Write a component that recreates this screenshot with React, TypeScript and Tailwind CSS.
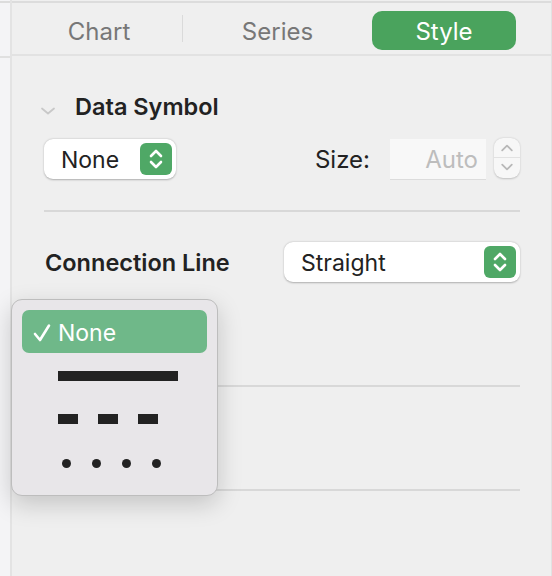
import React from "react";

const font = { fontFamily: "Inter, 'Noto Sans', sans-serif" };

function UpDown({ className }: { className?: string }) {
  return (
    <svg viewBox="0 0 32 32" className={className} fill="none">
      <path
        d="M11 13 L16 8 L21 13 M11 19 L16 24 L21 19"
        stroke="currentColor"
        strokeWidth="2.6"
        strokeLinecap="round"
        strokeLinejoin="round"
      />
    </svg>
  );
}

function PopupButton({ label, className }: { label: string; className?: string }) {
  return (
    <div
      className={
        "flex h-[40px] items-center justify-between rounded-[9px] bg-white pl-[17px] pr-[4px] shadow-[0_0.5px_2px_rgba(0,0,0,0.28)] " +
        (className ?? "")
      }
    >
      <span className="pt-[2px] text-[23px] text-[#222]">{label}</span>
      <div className="flex h-[32px] w-[32px] items-center justify-center rounded-[6px] bg-[#4fa866] text-white">
        <UpDown className="h-[32px] w-[32px]" />
      </div>
    </div>
  );
}

export default function App() {
  return (
    <div className="relative flex h-[576px] w-[552px] overflow-hidden bg-white" style={font}>
      {/* left sliver of the canvas */}
      <div className="flex w-[12px] shrink-0 flex-col border-r-2 border-[#e3e3e3] bg-[#f4f4f6]">
        <div className="mt-[1px] h-[2px] bg-[#dcdcdc]" />
        <div className="h-[53px]" />
        <div className="h-[2px] bg-[#e0e0e0]" />
      </div>

      <div className="flex flex-1 flex-col border-r border-[#e2e2e2] bg-[#efefef]">
        <div className="mt-[1px] h-[2px] bg-[#dcdcdc]" />
        {/* tabs */}
        <div className="flex h-[53px] items-center border-b-2 border-[#e2e2e2] pl-[4px] pr-[35px]">
          <div className="flex w-[166px] justify-center pt-[7px] text-[24px] text-[#777]">Chart</div>
          <div className="h-[27px] w-px bg-[#dadada]" />
          <div className="flex w-[189px] justify-center pt-[7px] text-[24px] text-[#777]">Series</div>
          <div className="mt-[3px] flex h-[39px] flex-1 items-center justify-center rounded-[10px] bg-[#4aa35d] pt-[3px] text-[24px] text-white">
            Style
          </div>
        </div>

        <div className="flex flex-col pl-[32px] pr-[31px]">
          {/* Data Symbol */}
          <div className="mt-[36px] flex h-[30px] items-center">
            <svg viewBox="0 0 16 8" className="ml-[-4px] mt-[7px] h-[8px] w-[16px] text-[#c8c8c8]" fill="none">
              <path d="M2 1.5 L8 6.5 L14 1.5" stroke="currentColor" strokeWidth="1.8" strokeLinecap="round" strokeLinejoin="round" />
            </svg>
            <span className="ml-[19px] text-[23.5px] font-semibold text-[#222]">Data Symbol</span>
          </div>

          <div className="mt-[17px] flex h-[40px] items-center">
            <PopupButton label="None" className="w-[132px]" />
            <span className="ml-auto pt-[2px] text-[24px] text-[#222]">Size:</span>
            <div className="ml-[20px] flex h-[40px] w-[96px] items-center justify-end bg-[#f8f8f8] pr-[8px] pt-[2px] text-[24px] text-[#bdbdbd] shadow-[0_1px_0_#dcdcdc]">
              Auto
            </div>
            <div className="ml-[8px] mb-[3px] flex h-[40px] w-[26px] flex-col rounded-[9px] bg-[#f7f7f7] text-[#b8b8b8] shadow-[0_0.5px_2px_rgba(0,0,0,0.2)]">
              <div className="flex flex-1 items-center justify-center border-b border-[#e2e2e2]">
                <svg viewBox="0 0 16 10" className="mt-[2px] h-[8px] w-[14px]" fill="none">
                  <path d="M2 8 L8 2 L14 8" stroke="currentColor" strokeWidth="2.2" strokeLinecap="round" strokeLinejoin="round" />
                </svg>
              </div>
              <div className="flex flex-1 items-center justify-center">
                <svg viewBox="0 0 16 10" className="mb-[2px] h-[8px] w-[14px]" fill="none">
                  <path d="M2 2 L8 8 L14 2" stroke="currentColor" strokeWidth="2.2" strokeLinecap="round" strokeLinejoin="round" />
                </svg>
              </div>
            </div>
          </div>

          <div className="mt-[31px] h-[2px] bg-[#d8d8d8]" />

          {/* Connection Line */}
          <div className="mt-[30px] flex h-[40px] items-center justify-between">
            <span className="ml-[1px] pt-[2px] text-[23.5px] font-semibold text-[#222]">Connection Line</span>
            <PopupButton label="Straight" className="w-[236px]" />
          </div>

          <div className="mt-[103px] h-[2px] bg-[#d8d8d8]" />
          <div className="mt-[102px] h-[2px] bg-[#d8d8d8]" />
        </div>
      </div>

      {/* open line-style menu */}
      <div className="absolute left-[11px] top-[299px] flex h-[197px] w-[207px] flex-col rounded-[11px] border border-[#bdbdbd] bg-[#e8e6e9] px-[10px] pt-[10px] shadow-[0_8px_24px_rgba(0,0,0,0.18)]">
        <div className="flex h-[43px] items-center rounded-[7px] bg-[#6fb889] pl-[11px] pt-[3px] text-[23px] text-white">
          <svg viewBox="0 0 18 20" className="h-[20px] w-[18px]" fill="none">
            <path d="M2 11 L7 17 L16 2.5" stroke="white" strokeWidth="2.6" strokeLinecap="round" strokeLinejoin="round" />
          </svg>
          <span className="ml-[7px]">None</span>
        </div>
        <div className="mt-[18px] ml-[36px] h-[10px] w-[120px] bg-[#222]" />
        <div className="mt-[33px] ml-[36px] flex gap-[20px]">
          <div className="h-[10px] w-[20px] bg-[#222]" />
          <div className="h-[10px] w-[20px] bg-[#222]" />
          <div className="h-[10px] w-[20px] bg-[#222]" />
        </div>
        <div className="mt-[35px] ml-[40px] flex gap-[21px]">
          <div className="h-[9px] w-[9px] rounded-full bg-[#222]" />
          <div className="h-[9px] w-[9px] rounded-full bg-[#222]" />
          <div className="h-[9px] w-[9px] rounded-full bg-[#222]" />
          <div className="h-[9px] w-[9px] rounded-full bg-[#222]" />
        </div>
      </div>
    </div>
  );
}
